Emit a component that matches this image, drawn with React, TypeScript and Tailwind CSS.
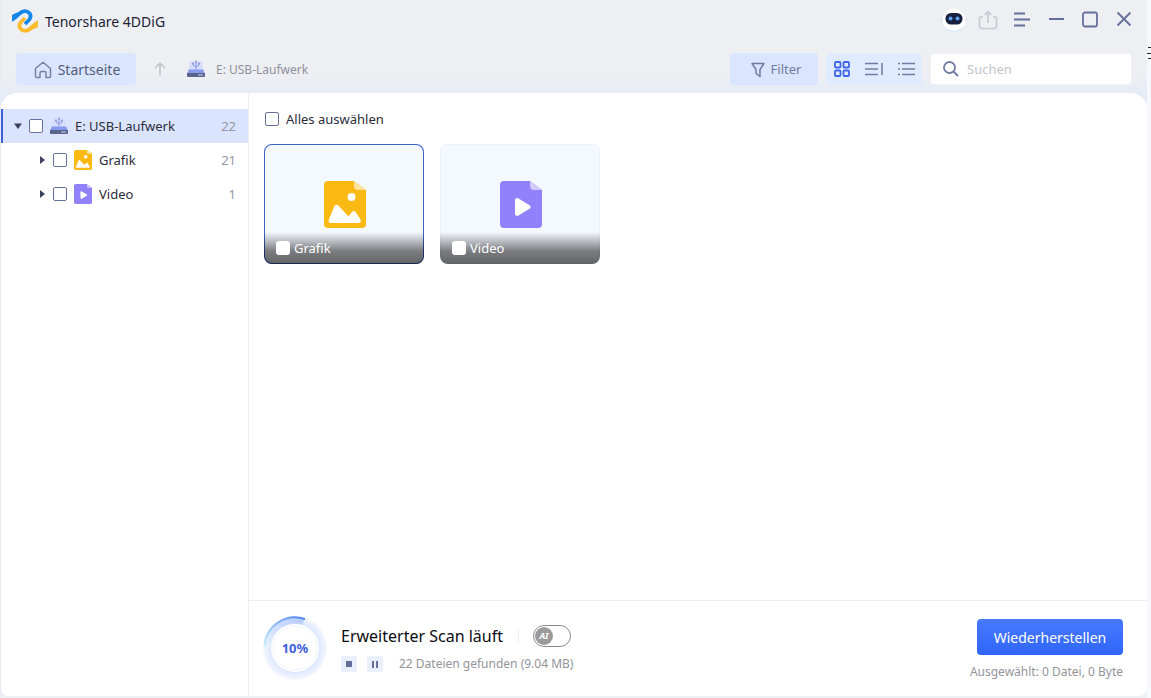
import type { ReactNode } from "react";

type Kind = "drive" | "image" | "video";

interface TreeItem {
  label: string;
  count: number;
  kind: Kind;
}

const categories: TreeItem[] = [
  { label: "Grafik", count: 21, kind: "image" },
  { label: "Video", count: 1, kind: "video" },
];

function Logo() {
  return (
    <svg viewBox="0 0 26 24" className="h-6 w-[26px]" fill="none">
      <path
        d="M25 14 18.500 19.500C15 22.700 11 22.700 8.500 19.800 6.500 17 7.300 14.700 9.500 12.500L13 9"
        stroke="#fdbb2d"
        strokeWidth="3.800"
      />
      <path d="M26 11v7l-5 2.500-2-4z" fill="#fdbb2d" />
      <path
        d="M1 10 7.500 4.500C11 1.300 15 1.300 17.500 4.200 19.500 7 18.700 9.300 16.500 11.500L13 15"
        stroke="#1486e8"
        strokeWidth="3.800"
      />
      <path d="M0 13V6l5-2.500 2 4z" fill="#1486e8" />
    </svg>
  );
}

function DriveIcon() {
  return (
    <svg viewBox="0 0 18 18" className="h-[18px] w-[18px] shrink-0">
      <path d="M3 1h12l1.500 10h-15z" fill="#d5defc" />
      <path
        d="M9 1.500v8M6 3.500V5l3 2M12 3.500V5L9 7"
        stroke="#8d97dc"
        fill="none"
      />
      <circle cx="9" cy="1.500" r="1" fill="#8d97dc" />
      <circle cx="6" cy="3.500" r="1" fill="#8d97dc" />
      <circle cx="12" cy="3.500" r="1" fill="#8d97dc" />
      <path d="M2 9.500h14l2 4H0z" fill="#8799ee" />
      <path d="M0 13h18v3a1 1 0 0 1-1 1H1a1 1 0 0 1-1-1z" fill="#59648a" />
      <path d="M11 15h5" stroke="#c9d4ff" />
    </svg>
  );
}

function FileIcon({ kind, className }: { kind: Kind; className: string }) {
  const color = kind === "image" ? "#fbb914" : "#9181fb";
  const fold = kind === "image" ? "#fee29a" : "#d0c9fe";

  return (
    <svg viewBox="0 0 42 47" className={className} preserveAspectRatio="none">
      <path
        d="M4 0h26l12 9v34a4 4 0 0 1-4 4H4a4 4 0 0 1-4-4V4a4 4 0 0 1 4-4z"
        fill={color}
      />
      <path d="M30 0l12 9h-8a4 4 0 0 1-4-4z" fill={fold} />
      {kind === "image" ? (
        <g fill="#fff">
          <circle cx="27.500" cy="16" r="4" />
          <path d="M5 38 10 26c1-2.500 3.200-3 4.800-1l9.700 10.500 3.500-4.500c1.200-1.500 3-1.300 4 .5l4.500 7c1 2 .2 3.500-2 3.500H7c-2.300 0-3-1.700-2-4z" />
        </g>
      ) : (
        <path
          d="M15 19.500c0-2.200 1.800-3 3.500-2l11 6.700c1.500 1 1.500 2.600 0 3.600l-11 6.700c-1.700 1-3.500.2-3.500-2z"
          fill="#fff"
        />
      )}
    </svg>
  );
}

function Checkbox({ id }: { id: string }) {
  return (
    <input
      id={id}
      type="checkbox"
      className="h-3.5 w-3.5 shrink-0 appearance-none rounded-[2px] border border-[#66709a] bg-white checked:bg-[#3b6bf5]"
    />
  );
}

function TreeRow({ item, root = false }: { item: TreeItem; root?: boolean }) {
  const id = `tree-${item.kind}`;

  return (
    <li
      className={`flex h-[34px] items-center border-l-2 pr-3 ${
        root ? "border-[#3c62d8] bg-[#dae4ff] pl-2.5" : "border-transparent pl-[34px]"
      }`}
    >
      <button aria-label={`${item.label} aufklappen`} className="w-[11px]">
        <svg viewBox="0 0 10 10" className="h-2.5 w-2.5" fill="#3c4160">
          {root ? <path d="M1 2.500h8L5 8z" /> : <path d="M3 1v8l5-4z" />}
        </svg>
      </button>
      <span className="ml-[5px] flex">
        <Checkbox id={id} />
      </span>
      <label htmlFor={id} className="ml-[7px] flex flex-1 items-center gap-[7px] text-[#2b2d3a]">
        {item.kind === "drive" ? (
          <DriveIcon />
        ) : (
          <FileIcon kind={item.kind} className="h-5 w-[18px]" />
        )}
        <span className="pt-0.5">{item.label}</span>
      </label>
      <span className="pt-0.5 text-[#95979f]">{item.count}</span>
    </li>
  );
}

function TitleButton({ label, children }: { label: string; children: ReactNode }) {
  return (
    <button aria-label={label} className="flex h-10 w-[34px] items-center justify-center">
      {children}
    </button>
  );
}

function TitleBar() {
  return (
    <div className="flex h-10 items-center justify-between pr-1.5 pl-[11px]">
      <div className="flex items-center gap-[7px] pt-0.5">
        <Logo />
        <h1 className="pt-0.5 text-sm text-[#1d1f33]">Tenorshare 4DDiG</h1>
      </div>
      <div className="flex text-[#65709a]">
        <TitleButton label="Assistent">
          <svg viewBox="0 0 26 26" className="h-[26px] w-[26px]">
            <circle cx="13" cy="13" r="11.500" fill="#fff" />
            <path d="M4 20a11.500 11.500 0 0 0 18 0" stroke="#cfe4fb" fill="none" />
            <path d="M.7 11v3M25.300 11v3" stroke="#d6d9e2" />
            <rect x="4.500" y="6" width="17" height="11.500" rx="5.500" fill="#17203f" />
            <circle cx="9.500" cy="11.500" r="2" fill="#5fa0ee" />
            <circle cx="16.500" cy="11.500" r="2" fill="#5fa0ee" />
          </svg>
        </TitleButton>
        <TitleButton label="Teilen">
          <svg viewBox="0 0 20 20" className="h-5 w-5" fill="none" stroke="#c8cad4" strokeWidth="1.700">
            <path d="M5 7H2.500L1.500 8v9l1.500 1.500h14l1.500-1.500V8l-1-1H15M10 13V2M6.800 4.800 10 1.700l3.200 3.100" />
          </svg>
        </TitleButton>
        <TitleButton label="Menü">
          <svg viewBox="0 0 18 18" className="h-[18px] w-[18px]" stroke="currentColor" strokeWidth="1.800">
            <path d="M1 2.500h11M1 8.500h16M1 14.500h11" />
          </svg>
        </TitleButton>
        <TitleButton label="Minimieren">
          <svg viewBox="0 0 18 18" className="h-[18px] w-[18px]" stroke="currentColor" strokeWidth="2">
            <path d="M2 8h15" />
          </svg>
        </TitleButton>
        <TitleButton label="Maximieren">
          <svg viewBox="0 0 18 18" className="h-[18px] w-[18px]" stroke="currentColor" strokeWidth="1.800" fill="none">
            <rect x="2" y="1.500" width="14" height="14" rx="2" />
          </svg>
        </TitleButton>
        <TitleButton label="Schließen">
          <svg viewBox="0 0 18 18" className="h-[18px] w-[18px]" stroke="currentColor" strokeWidth="1.800">
            <path d="m2.500 1.500 13 13M15.500 1.500l-13 13" />
          </svg>
        </TitleButton>
      </div>
    </div>
  );
}

function Toolbar() {
  return (
    <div className="flex items-center justify-between px-[15px] pt-[13px] pb-2">
      <div className="flex items-center">
        <button className="flex h-8 w-[120px] items-center justify-center gap-1.5 rounded bg-[#dae5ff] pt-0.5 pl-0.5 text-sm text-[#545c7c]">
          <svg viewBox="0 0 18 18" className="h-[18px] w-[18px]" fill="none" stroke="#7781a5" strokeWidth="1.500" strokeLinejoin="round">
            <path d="M6 16.500H2.500a1 1 0 0 1-1-1V7.500L9 1.200l7.500 6.300v8a1 1 0 0 1-1 1H12V12a1.500 1.500 0 0 0-1.500-1.500h-3A1.500 1.500 0 0 0 6 12z" />
          </svg>
          Startseite
        </button>
        <button aria-label="Nach oben" className="flex w-12 justify-center">
          <svg viewBox="0 0 12 14" className="h-3.5 w-3" fill="none" stroke="#c1c4cd" strokeWidth="1.600">
            <path d="M6 13.500V1.500M1 6l5-4.700L11 6" />
          </svg>
        </button>
        <a href="#" className="ml-[3px] flex items-center gap-[11px] text-xs text-[#8e919c]">
          <DriveIcon />
          <span className="pt-0.5">E: USB-Laufwerk</span>
        </a>
      </div>
      <div className="flex gap-2 text-[#727ca2]">
        <button className="flex h-8 w-[88px] items-center justify-center gap-1.5 rounded bg-[#dae5ff] pt-0.5 pl-1 text-[13px]">
          <svg viewBox="0 0 14 16" className="h-4 w-3.5" fill="none" stroke="currentColor" strokeWidth="1.500" strokeLinejoin="round">
            <path d="M1 1.500h12L9 7.500v7l-4-3v-4z" />
          </svg>
          Filter
        </button>
        <div className="flex h-8 w-24 items-center justify-around rounded bg-[#e1ebff]">
          <button aria-label="Kacheln">
            <svg viewBox="0 0 18 18" className="h-[18px] w-[18px]" fill="none" stroke="#3f66e8" strokeWidth="1.800">
              <rect x="2" y="2" width="5.500" height="5.500" rx="1" />
              <rect x="10.500" y="2" width="5.500" height="5.500" rx="1" />
              <rect x="2" y="10.500" width="5.500" height="5.500" rx="1" />
              <rect x="10.500" y="10.500" width="5.500" height="5.500" rx="1" />
            </svg>
          </button>
          <button aria-label="Vorschau">
            <svg viewBox="0 0 18 18" className="h-[18px] w-[18px]" stroke="currentColor" strokeWidth="1.500">
              <path d="M0 3.500h13M0 9h13M0 14.500h13M17 3v12" />
            </svg>
          </button>
          <button aria-label="Liste">
            <svg viewBox="0 0 18 18" className="h-[18px] w-[18px]" stroke="currentColor" strokeWidth="1.500">
              <path d="M5 3.500h13M5 9h13M5 14.500h13M1 3.500h2M1 9h2M1 14.500h2" />
            </svg>
          </button>
        </div>
        <label className="flex h-8 w-[202px] items-center gap-2 rounded border border-[#f0f2f6] bg-white px-3">
          <svg viewBox="0 0 16 16" className="h-4 w-4 shrink-0" fill="none" stroke="currentColor" strokeWidth="1.800">
            <circle cx="6.500" cy="6.500" r="5.500" />
            <path d="m10.500 10.500 4.500 4.500" />
          </svg>
          <input
            type="search"
            aria-label="Suchen"
            placeholder="Suchen"
            className="w-full min-w-0 pt-0.5 text-[13px] outline-none placeholder:text-[#c3c5cc]"
          />
        </label>
      </div>
    </div>
  );
}

function Card({ item, selected }: { item: TreeItem; selected: boolean }) {
  const id = `card-${item.kind}`;

  return (
    <div
      className={`relative flex h-[120px] w-40 justify-center overflow-hidden rounded-lg bg-[#f4f8ff] pl-0.5 inset-ring ${
        selected ? "inset-ring-[#3c62c8]" : "inset-ring-[#ecf1fa]"
      }`}
    >
      <FileIcon kind={item.kind} className="mt-[37px] h-[47px] w-[42px]" />
      <div className="absolute inset-x-0 bottom-0 flex h-8 items-center gap-1 bg-linear-to-b from-transparent via-black/50 via-60% to-black/60 pl-3 text-[13px] text-white">
        <input
          id={id}
          type="checkbox"
          className="h-3.5 w-3.5 appearance-none rounded-[3px] bg-white checked:bg-[#3b6bf5]"
        />
        <label htmlFor={id} className="pt-0.5">
          {item.label}
        </label>
      </div>
    </div>
  );
}

function ProgressRing({ value }: { value: number }) {
  return (
    <div className="grid h-16 w-16 place-items-center">
      <svg viewBox="0 0 64 64" className="col-start-1 row-start-1 h-16 w-16" fill="none">
        <defs>
          <radialGradient id="halo">
            <stop offset="0.720" stopColor="#dbe5ff" />
            <stop offset="1" stopColor="#f5f8ff" />
          </radialGradient>
          <linearGradient id="arc" x1="0" y1="1" x2="1" y2="0">
            <stop stopColor="#c9f0fa" />
            <stop offset="1" stopColor="#4f86f3" />
          </linearGradient>
          <linearGradient id="arc-fill" x1="0" y1="1" x2="1" y2="0">
            <stop stopColor="#e6effe" />
            <stop offset="1" stopColor="#b7cdfc" />
          </linearGradient>
        </defs>
        <circle cx="32" cy="32" r="32" fill="url(#halo)" />
        <path d="M4.500 31A27.500 27.500 0 0 1 40.500 5.900" stroke="url(#arc-fill)" strokeWidth="6" />
        <path d="M1.500 31A30.500 30.500 0 0 1 42 3" stroke="url(#arc)" strokeWidth="2" />
        <circle cx="32" cy="32" r="24" fill="#fff" />
        <circle cx="32" cy="32" r="22" stroke="#f1f4fd" />
      </svg>
      <span className="col-start-1 row-start-1 pt-0.5 text-[13px] font-bold text-[#3f5fdf]">{value}%</span>
    </div>
  );
}

function Footer() {
  return (
    <footer className="flex h-24 items-start justify-between border-t border-[#eeeff3] pr-6 pl-3.5">
      <div className="flex gap-3.5 pt-[15px]">
        <ProgressRing value={10} />
        <div>
          <div className="flex h-10 items-center">
            <h2 className="text-base text-[#0b0b12]">Erweiterter Scan läuft</h2>
            <span className="mr-3.5 ml-[15px] h-3 w-px bg-[#eceef3]" />
            <button
              role="switch"
              aria-checked="false"
              aria-label="KI"
              className="flex h-[22px] w-[38px] items-center rounded-full border border-[#8c8c8c] px-px"
            >
              <span className="flex h-[18px] w-[18px] items-center justify-center rounded-full bg-[#9b9b9b] text-[9px] font-bold text-white italic">
                AI
              </span>
            </button>
          </div>
          <div className="flex h-4 items-center text-xs text-[#94949a]">
            <button aria-label="Stopp" className="flex h-4 w-4 items-center justify-center rounded-xs bg-[#e9effc]">
              <span className="h-1.5 w-1.5 bg-[#65709a]" />
            </button>
            <button aria-label="Pause" className="ml-2.5 flex h-4 w-4 items-center justify-center gap-0.5 rounded-xs bg-[#e9effc]">
              <span className="h-[7px] w-0.5 bg-[#65709a]" />
              <span className="h-[7px] w-0.5 bg-[#65709a]" />
            </button>
            <span className="ml-4">22 Dateien gefunden (9.04 MB)</span>
          </div>
        </div>
      </div>
      <div className="flex flex-col items-end gap-[9px] pt-[18px]">
        <button className="h-9 w-[146px] rounded bg-linear-to-b from-[#487aff] to-[#2f66fb] pt-0.5 text-sm text-white">
          Wiederherstellen
        </button>
        <p className="text-xs text-[#94949a]">Ausgewählt: 0 Datei, 0 Byte</p>
      </div>
    </footer>
  );
}

export default function App() {
  return (
    <div className="flex min-h-screen bg-[#f6f8fc] font-['Noto_Sans',sans-serif] text-[13px]">
      <div className="flex flex-1 flex-col border-l border-[#e8ebf2] bg-[#eef0f4] pb-0.5">
        <header className="bg-linear-to-b from-[#eeeff3] from-80% to-[#e6ecf6]">
          <TitleBar />
          <Toolbar />
        </header>
        <div className="flex flex-1 bg-linear-to-b from-[#e6ecf6] to-[#eef0f4]">
          <div className="flex flex-1 overflow-hidden rounded-t-2xl rounded-b-lg bg-white">
            <nav className="w-[248px] shrink-0 border-r border-[#eeeff3] pt-4">
              <ul>
                <TreeRow root item={{ label: "E: USB-Laufwerk", count: 22, kind: "drive" }} />
                {categories.map((c) => (
                  <TreeRow key={c.kind} item={c} />
                ))}
              </ul>
            </nav>
            <main className="flex flex-1 flex-col">
              <section className="flex-1 px-[15px] pt-4">
                <div className="flex h-5 items-center gap-[7px] pl-px text-[#2b2d3a]">
                  <Checkbox id="select-all" />
                  <label htmlFor="select-all" className="pt-0.5">
                    Alles auswählen
                  </label>
                </div>
                <div className="mt-[15px] flex flex-wrap gap-4">
                  {categories.map((c, i) => (
                    <Card key={c.kind} item={c} selected={i === 0} />
                  ))}
                </div>
              </section>
              <Footer />
            </main>
          </div>
        </div>
      </div>
      <div className="w-1 shrink-0 overflow-hidden pt-[46px]">
        <svg viewBox="0 0 4 14" className="h-3.5 w-1" stroke="#222" strokeWidth="1">
          <path d="M1 1.500h3M0 7.500h4M1 12.500h3" />
        </svg>
      </div>
    </div>
  );
}
